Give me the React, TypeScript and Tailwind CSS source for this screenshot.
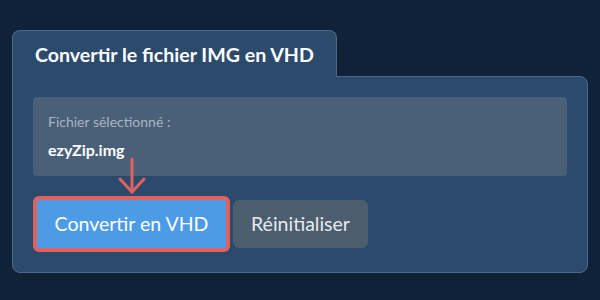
import { memo } from "react"

export default function App() {
  return (
    <main
      className="w-[600px] h-[300px] bg-[#0f2237] pt-[30px] px-[12px]"
      style={{ fontFamily: "Lato, 'Open Sans', sans-serif" }}
    >
      <Converter />
    </main>
  )
}

const Converter = memo(function Converter() {
  return (
    <div className="flex flex-col items-start">
      <div className="relative z-10 -mb-px w-[325px] h-[47px] rounded-t-lg border border-b-0 border-[#4d6989] bg-[#2c4a6b] pl-[22px] pt-[13px]">
        <h2 className="text-[19.6px] leading-[22px] font-bold text-white">
          Convertir le fichier IMG en VHD
        </h2>
      </div>
      <div className="relative w-[576px] rounded-b-lg rounded-tr-lg border border-[#4d6989] bg-[#2c4a6b] p-[20px]">
        <div className="h-[79px] rounded bg-[#4a5f78] px-[15px] pt-[16px]">
          <p className="text-[14px] leading-[18px] text-[#a9b4c1]">Fichier sélectionné :</p>
          <p className="mt-[9px] text-[16px] leading-[20px] font-bold text-white">ezyZip.img</p>
        </div>
        <div className="mt-[20px] flex items-center gap-[3px]">
          <button className="w-[197px] h-[56px] rounded-md border-[4px] border-[#e0625e] bg-[#4c9be7] text-[19.5px] text-white">
            Convertir en VHD
          </button>
          <button className="w-[135px] h-[48px] rounded-md bg-[#4c5d6f] text-[19.5px] text-[#e6e9ed]">
            Réinitialiser
          </button>
        </div>
        <svg
          className="absolute left-[105px] top-[81px]"
          width="28"
          height="37"
          viewBox="0 0 28 37"
          fill="none"
          stroke="#e0625e"
          strokeWidth="3"
          strokeLinecap="round"
          strokeLinejoin="round"
        >
          <line x1="14" y1="1" x2="14" y2="34" />
          <polyline points="2,21 14,34 26,21" />
        </svg>
      </div>
    </div>
  )
})
